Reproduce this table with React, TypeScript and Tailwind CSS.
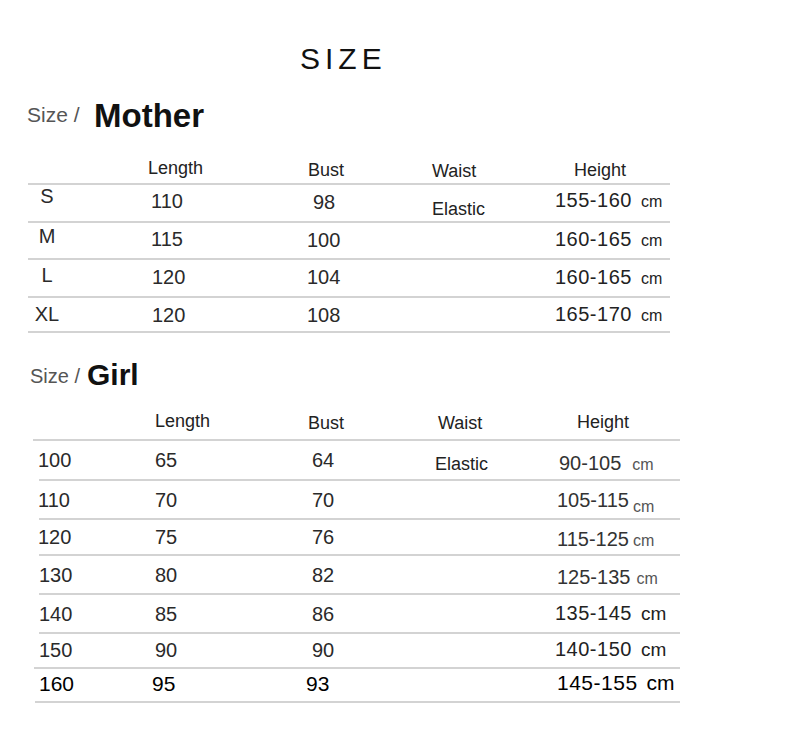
import type { ReactNode } from "react";

type Cell = { t?: ReactNode; c: string };
type RowData = { h: string; line: string; cells: Cell[] };

const line = "h-[2px] bg-[#d3d3d3]";

function Height({ n, nc, cm, cc }: { n: string; nc: string; cm?: string; cc: string }) {
  return (
    <div className="flex items-baseline">
      <span className={nc}>{n}</span>
      <span className={cc}>{cm ?? "cm"}</span>
    </div>
  );
}

function Table({ cols, header, rows, className }: { cols: string[]; header: RowData; rows: RowData[]; className: string }) {
  const all = [header, ...rows];
  return (
    <div className={className}>
      {all.map((r, ri) => (
        <div key={ri}>
          <div className={`flex ${r.h}`}>
            {r.cells.map((cell, i) => (
              <div key={i} className={`${cols[i]} ${cell.c} leading-[20px]`}>
                {cell.t}
              </div>
            ))}
          </div>
          <div className={`${line} ${r.line}`} />
        </div>
      ))}
    </div>
  );
}

const label = (s: string) => <span className="block w-[38px] text-center">{s}</span>;

const mHead = "text-[18px] text-[#222]";
const mNum = "text-[20px] text-[#2a2a2a]";
const mH = (n: string) => (
  <Height n={n} nc="text-[20px] tracking-[0.5px] text-[#222]" cc="ml-[9px] text-[16px] text-[#222]" />
);

const motherCols = ["w-[120px]", "w-[159px]", "w-[125px]", "w-[122px]", "flex-1"];

const motherHeader: RowData = {
  h: "h-[33px]",
  line: "",
  cells: [
    { c: "" },
    { t: "Length", c: `${mHead} pt-[8px]` },
    { t: "Bust", c: `${mHead} pt-[10px] pl-[1px]` },
    { t: "Waist", c: `${mHead} pt-[11px]` },
    { t: "Height", c: `${mHead} pt-[10px] pl-[20px]` },
  ],
};

const motherRows: RowData[] = [
  {
    h: "h-[36px]",
    line: "",
    cells: [
      { t: label("S"), c: `${mNum} pt-[1px]` },
      { t: "110", c: `${mNum} pt-[6px] pl-[3px]` },
      { t: "98", c: `${mNum} pt-[7px] pl-[6px]` },
      { t: "Elastic", c: "text-[18px] text-[#222] pt-[14px]" },
      { t: mH("155-160"), c: "pt-[5px] pl-[1px]" },
    ],
  },
  {
    h: "h-[35px]",
    line: "",
    cells: [
      { t: label("M"), c: `${mNum} pt-[3px]` },
      { t: "115", c: `${mNum} pt-[6px] pl-[3px]` },
      { t: "100", c: `${mNum} pt-[7px]` },
      { c: "" },
      { t: mH("160-165"), c: "pt-[6px] pl-[1px]" },
    ],
  },
  {
    h: "h-[36px]",
    line: "",
    cells: [
      { t: label("L"), c: `${mNum} pt-[5px]` },
      { t: "120", c: `${mNum} pt-[7px] pl-[4px]` },
      { t: "104", c: `${mNum} pt-[7px]` },
      { c: "" },
      { t: mH("160-165"), c: "pt-[7px] pl-[1px]" },
    ],
  },
  {
    h: "h-[33px]",
    line: "",
    cells: [
      { t: label("XL"), c: `${mNum} pt-[6px]` },
      { t: "120", c: `${mNum} pt-[7px] pl-[4px]` },
      { t: "108", c: `${mNum} pt-[7px]` },
      { c: "" },
      { t: mH("165-170"), c: "pt-[6px] pl-[1px]" },
    ],
  },
];

const girlCols = ["w-[122px]", "w-[153px]", "w-[130px]", "w-[117px]", "flex-1"];
const gNum = "text-[20px] text-[#2a2a2a]";
const gBig = "text-[21px] text-black";
const soft = (n: string, cc: string) => (
  <Height n={n} nc="text-[20px] text-[#333]" cc={`text-[16px] text-[#555] ${cc}`} />
);
const sharp = (n: string) => (
  <Height n={n} nc="text-[20px] tracking-[0.5px] text-[#222]" cc="ml-[9px] text-[19px] text-[#222]" />
);

const girlHeader: RowData = {
  h: "h-[39px]",
  line: "",
  cells: [
    { c: "" },
    { t: "Length", c: `${mHead} pt-[11px]` },
    { t: "Bust", c: `${mHead} pt-[13px]` },
    { t: "Waist", c: `${mHead} pt-[13px]` },
    { t: "Height", c: `${mHead} pt-[12px] pl-[22px]` },
  ],
};

const girlRows: RowData[] = [
  {
    h: "h-[38px]",
    line: "ml-[6px]",
    cells: [
      { t: "100", c: `${gNum} pt-[9px] pl-[5px]` },
      { t: "65", c: `${gNum} pt-[9px]` },
      { t: "64", c: `${gNum} pt-[9px] pl-[4px]` },
      { t: "Elastic", c: "text-[18px] text-[#222] pt-[13px] -ml-[3px]" },
      { t: soft("90-105", "ml-[11px]"), c: "pt-[12px] pl-[7px]" },
    ],
  },
  {
    h: "h-[37px]",
    line: "ml-[6px]",
    cells: [
      { t: "110", c: `${gNum} pt-[9px] pl-[5px]` },
      { t: "70", c: `${gNum} pt-[9px]` },
      { t: "70", c: `${gNum} pt-[9px] pl-[4px]` },
      { c: "" },
      { t: soft("105-115", "ml-[4px] translate-y-[5px]"), c: "pt-[9px] pl-[2px]" },
    ],
  },
  {
    h: "h-[34px]",
    line: "ml-[6px]",
    cells: [
      { t: "120", c: `${gNum} pt-[7px] pl-[5px]` },
      { t: "75", c: `${gNum} pt-[7px]` },
      { t: "76", c: `${gNum} pt-[7px] pl-[4px]` },
      { c: "" },
      { t: soft("115-125", "ml-[4px]"), c: "pt-[9px] pl-[2px]" },
    ],
  },
  {
    h: "h-[37px]",
    line: "ml-[6px]",
    cells: [
      { t: "130", c: `${gNum} pt-[9px] pl-[6px]` },
      { t: "80", c: `${gNum} pt-[9px]` },
      { t: "82", c: `${gNum} pt-[9px] pl-[4px]` },
      { c: "" },
      { t: soft("125-135", "ml-[6px]"), c: "pt-[11px] pl-[2px]" },
    ],
  },
  {
    h: "h-[37px]",
    line: "ml-[6px]",
    cells: [
      { t: "140", c: `${gNum} pt-[9px] pl-[6px]` },
      { t: "85", c: `${gNum} pt-[9px]` },
      { t: "86", c: `${gNum} pt-[9px] pl-[4px]` },
      { c: "" },
      { t: sharp("135-145"), c: "pt-[8px]" },
    ],
  },
  {
    h: "h-[33px]",
    line: "ml-[1px]",
    cells: [
      { t: "150", c: `${gNum} pt-[6px] pl-[6px]` },
      { t: "90", c: `${gNum} pt-[6px]` },
      { t: "90", c: `${gNum} pt-[6px] pl-[4px]` },
      { c: "" },
      { t: sharp("140-150"), c: "pt-[5px]" },
    ],
  },
  {
    h: "h-[32px]",
    line: "ml-[2px]",
    cells: [
      { t: "160", c: `${gBig} pt-[5px] pl-[6px]` },
      { t: "95", c: `${gBig} pt-[5px] -ml-[3px]` },
      { t: "93", c: `${gBig} pt-[5px] pl-[1px]` },
      { c: "" },
      {
        t: <Height n="145-155" nc="text-[21px] tracking-[0.5px]" cc="ml-[9px] text-[21px]" />,
        c: "text-black pt-[4px] pl-[5px]",
      },
    ],
  },
];

export default function App() {
  return (
    <div className="w-[790px] h-[750px] bg-white text-[#222] font-['Liberation_Sans',Arial,sans-serif]">
      <div className="pt-[41px] pl-[300px] text-[30px] leading-[36px] tracking-[5px] text-[#111]">SIZE</div>

      <div className="mt-[19px] h-[40px] pl-[27px] flex items-baseline">
        <span className="w-[67px] text-[21px] leading-[40px] text-[#555] -translate-y-[5px]">Size /</span>
        <span className="text-[33px] leading-[40px] font-bold text-[#111]">Mother</span>
      </div>

      <Table
        className="mt-[14px] ml-[28px] w-[642px]"
        cols={motherCols}
        header={motherHeader}
        rows={motherRows}
      />

      <div className="mt-[22px] h-[40px] pl-[30px] flex items-baseline">
        <span className="w-[57px] text-[20px] leading-[40px] text-[#555] -translate-y-[2px]">Size /</span>
        <span className="text-[30px] leading-[40px] font-bold text-[#111]">Girl</span>
      </div>

      <Table
        className="mt-[5px] ml-[33px] w-[647px]"
        cols={girlCols}
        header={girlHeader}
        rows={girlRows}
      />
    </div>
  );
}
